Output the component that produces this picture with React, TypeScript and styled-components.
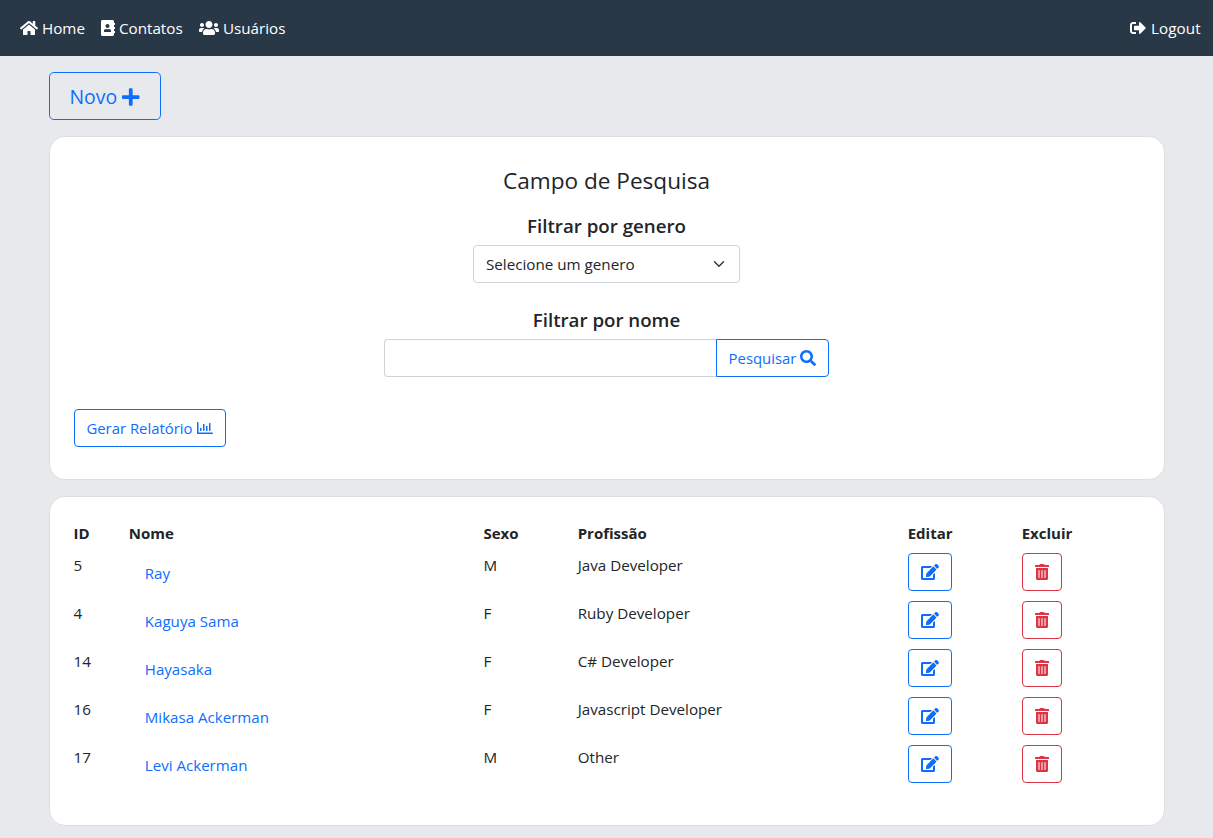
import React from "react";
import styled, { createGlobalStyle } from "styled-components";
import {
  FaHome,
  FaAddressBook,
  FaUsers,
  FaSignOutAlt,
  FaPlus,
  FaSearch,
  FaRegChartBar,
  FaEdit,
  FaTrashAlt,
} from "react-icons/fa";

const GlobalStyle = createGlobalStyle`
  *, *::before, *::after { box-sizing: border-box; }
  body {
    margin: 0;
    background: #e8e9ed;
    color: #212529;
    font-family: "Open Sans", "Noto Sans", sans-serif;
    font-size: 15.2px;
    line-height: 24px;
    overflow: hidden;
  }
`;

const Icon = styled.span<{ $width?: number; $height?: number }>`
  display: block;
  flex: none;
  width: ${(p) => p.$width ?? 16}px;
  height: ${(p) => p.$height ?? 16}px;
  svg { display: block; width: 100%; height: 100%; }
`;

const Navbar = styled.nav`
  display: flex;
  align-items: center;
  height: 56px;
  padding: 0 12px 0 20px;
  background: #293847;
`;

const NavLink = styled.a<{ $width: number; $end?: boolean }>`
  display: flex;
  align-items: center;
  gap: ${(p) => (p.$end ? 5 : 4)}px;
  width: ${(p) => p.$width}px;
  margin-left: ${(p) => (p.$end ? "auto" : "0")};
  color: #fff;
  font-size: 15.2px;
  letter-spacing: ${(p) => (p.$end ? 0.1 : 0)}px;
  text-decoration: none;
  white-space: nowrap;
`;

const Container = styled.main`
  width: 1116px;
  margin: 0 auto;
  padding-top: 16px;
`;

const Button = styled.button<{ $width: number; $tone?: string; $large?: boolean }>`
  display: flex;
  align-items: center;
  justify-content: center;
  gap: ${(p) => (p.$large ? 5 : 4)}px;
  flex: none;
  width: ${(p) => p.$width}px;
  height: ${(p) => (p.$large ? 48 : 38)}px;
  padding: ${(p) => (p.$large ? "2px 0 0" : "0")};
  border: 1px solid ${(p) => p.$tone ?? "#0d6efd"};
  border-radius: ${(p) => (p.$large ? 4.8 : 4)}px;
  background: transparent;
  color: ${(p) => p.$tone ?? "#0d6efd"};
  font-family: inherit;
  font-size: ${(p) => (p.$large ? 19.4 : 14.9)}px;
  line-height: 24px;
  white-space: nowrap;
`;

const Card = styled.section`
  margin-top: 16px;
  padding: 24px;
  border: 1px solid #dfdfdf;
  border-radius: 16px;
  background: #fff;
`;

const SearchCard = styled(Card)`
  display: flex;
  flex-direction: column;
  align-items: center;
  height: 344px;
`;

const Title = styled.h4`
  margin: 5px 0 0;
  font-size: 22.6px;
  font-weight: 400;
  line-height: 29px;
`;

const Label = styled.h5<{ $top: number }>`
  margin: ${(p) => p.$top}px 0 7px;
  font-size: 18.7px;
  font-weight: 600;
  line-height: 24px;
`;

const Select = styled.div`
  display: flex;
  align-items: center;
  justify-content: space-between;
  width: 267px;
  height: 38px;
  padding: 0 12px;
  border: 1px solid #ced4da;
  border-radius: 4px;
`;

const SearchGroup = styled.form`
  display: flex;
  width: 445px;
  ${Button} { border-radius: 0 4px 4px 0; }
`;

const SearchInput = styled.input`
  flex: 1;
  min-width: 0;
  height: 38px;
  padding: 6px 12px;
  border: 1px solid #ced4da;
  border-right: 0;
  border-radius: 4px 0 0 4px;
  background: #fff;
  font: inherit;
`;

const ReportRow = styled.div`
  align-self: stretch;
  margin-top: 32px;
`;

const TableCard = styled(Card)`
  height: 330px;
`;

const Row = styled.div<{ $head?: boolean }>`
  display: grid;
  grid-template-columns: 55.3px 354.7px 94.2px 330px 114px 1fr;
  align-items: start;
  height: ${(p) => (p.$head ? 32 : 48)}px;
  font-size: ${(p) => (p.$head ? 15 : 15.2)}px;
  font-weight: ${(p) => (p.$head ? 700 : 400)};
`;

const ContactLink = styled.a`
  padding: 8px 16px;
  color: #0d6efd;
  font-size: 15.1px;
  text-decoration: none;
`;

const contacts = [
  { id: 5, name: "Ray", sex: "M", job: "Java Developer" },
  { id: 4, name: "Kaguya Sama", sex: "F", job: "Ruby Developer" },
  { id: 14, name: "Hayasaka", sex: "F", job: "C# Developer" },
  { id: 16, name: "Mikasa Ackerman", sex: "F", job: "Javascript Developer" },
  { id: 17, name: "Levi Ackerman", sex: "M", job: "Other" },
];

export default function App() {
  return (
    <>
      <GlobalStyle />
      <Navbar>
        <NavLink $width={81}><Icon $width={18}><FaHome /></Icon><span>Home</span></NavLink>
        <NavLink $width={98}><Icon $width={14}><FaAddressBook /></Icon><span>Contatos</span></NavLink>
        <NavLink $width={86}><Icon $width={20}><FaUsers /></Icon><span>Usuários</span></NavLink>
        <NavLink $width={71} $end><Icon><FaSignOutAlt /></Icon><span>Logout</span></NavLink>
      </Navbar>
      <Container>
        <Button $width={112} $large>
          <span>Novo</span>
          <Icon $width={17.5} $height={20}><FaPlus /></Icon>
        </Button>
        <SearchCard>
          <Title>Campo de Pesquisa</Title>
          <Label $top={19}>Filtrar por genero</Label>
          <Select>
            <span>Selecione um genero</span>
            <svg width="16" height="12" viewBox="0 0 16 16" fill="none" stroke="#343a40" strokeWidth="2" strokeLinecap="round" strokeLinejoin="round">
              <path d="M2 5l6 6 6-6" />
            </svg>
          </Select>
          <Label $top={25}>Filtrar por nome</Label>
          <SearchGroup>
            <SearchInput aria-label="Nome" />
            <Button $width={113} type="button"><span>Pesquisar</span><Icon><FaSearch /></Icon></Button>
          </SearchGroup>
          <ReportRow>
            <Button $width={152}><span>Gerar Relatório</span><Icon><FaRegChartBar /></Icon></Button>
          </ReportRow>
        </SearchCard>
        <TableCard>
          <Row $head>
            <span>ID</span>
            <span>Nome</span>
            <span>Sexo</span>
            <span>Profissão</span>
            <span>Editar</span>
            <span>Excluir</span>
          </Row>
          {contacts.map((c) => (
            <Row key={c.id}>
              <span>{c.id}</span>
              <ContactLink>{c.name}</ContactLink>
              <span>{c.sex}</span>
              <span>{c.job}</span>
              <Button $width={44} aria-label="Editar"><Icon $width={18}><FaEdit /></Icon></Button>
              <Button $width={40} $tone="#dc3545" aria-label="Excluir"><Icon $width={14}><FaTrashAlt /></Icon></Button>
            </Row>
          ))}
        </TableCard>
      </Container>
    </>
  );
}
